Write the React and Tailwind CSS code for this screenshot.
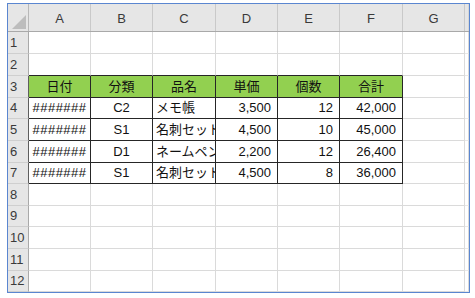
import React from "react";

const colW = ["w-[62px]", "w-[62px]", "w-[63px]", "w-[62px]", "w-[62px]", "w-[63px]", "w-[62px]"];
const rowH = ["h-[22px]", "h-[22px]", "h-[22px]", "h-[21px]", "h-[22px]", "h-[22px]", "h-[21px]", "h-[22px]", "h-[21px]", "h-[22px]", "h-[22px]", "h-[21px]"];
const letters = ["A", "B", "C", "D", "E", "F", "G"];

const tableData = {
  3: [
    { t: "日付", a: "c" },
    { t: "分類", a: "c" },
    { t: "品名", a: "c" },
    { t: "単価", a: "c" },
    { t: "個数", a: "c" },
    { t: "合計", a: "c" },
  ],
  4: [
    { t: "#######", a: "h" },
    { t: "C2", a: "c" },
    { t: "メモ帳", a: "l" },
    { t: "3,500", a: "r" },
    { t: "12", a: "r" },
    { t: "42,000", a: "r" },
  ],
  5: [
    { t: "#######", a: "h" },
    { t: "S1", a: "c" },
    { t: "名刺セット", a: "l" },
    { t: "4,500", a: "r" },
    { t: "10", a: "r" },
    { t: "45,000", a: "r" },
  ],
  6: [
    { t: "#######", a: "h" },
    { t: "D1", a: "c" },
    { t: "ネームペン", a: "l" },
    { t: "2,200", a: "r" },
    { t: "12", a: "r" },
    { t: "26,400", a: "r" },
  ],
  7: [
    { t: "#######", a: "h" },
    { t: "S1", a: "c" },
    { t: "名刺セット", a: "l" },
    { t: "4,500", a: "r" },
    { t: "8", a: "r" },
    { t: "36,000", a: "r" },
  ],
};

const font = { fontFamily: '"Liberation Sans", "Noto Sans CJK JP", sans-serif' };

function Cell({ r, c }) {
  const inTable = r >= 3 && r <= 7 && c <= 5;
  const aboveTable = r === 2 && c <= 5;
  const d = inTable ? tableData[r][c] : null;
  let cls = `${colW[c]} shrink-0 h-full flex items-center overflow-hidden whitespace-nowrap text-[13px] text-[#111] border-r border-b `;
  if (inTable) {
    cls += "border-[#262626] ";
  } else if (aboveTable) {
    cls += "border-r-[#dadada] border-b-[#262626] ";
  } else {
    cls += "border-[#dadada] ";
  }
  if (r === 3 && c <= 5) cls += "bg-[#92d050] ";
  else cls += "bg-white ";
  if (d) {
    if (d.a === "c") cls += "justify-center ";
    else if (d.a === "h") cls += "justify-center tracking-[0.5px] ";
    else if (d.a === "r") cls += "justify-end pr-[6px] ";
    else cls += "justify-start pl-[3px] ";
  }
  return <div className={cls}>{d ? d.t : null}</div>;
}

export default function App() {
  return (
    <div className="w-[475px] h-[298px] bg-white pl-[7px] pt-[3px]" style={font}>
      <div className="w-[463px] h-[290px] border border-[#5a86d0] bg-white flex flex-col overflow-hidden">
        {/* Column header */}
        <div className="h-[28px] flex shrink-0 bg-[#e6e6e6] border-b border-[#a9a9a9]">
          <div className="w-[21px] shrink-0 h-full border-r border-[#b8b8b8] flex items-end justify-end pr-[1px] pb-[1px]">
            <svg width="16" height="16" viewBox="0 0 16 16">
              <polygon points="15,1 15,15 1,15" fill="#bdbdbd" />
            </svg>
          </div>
          {letters.map((l, i) => (
            <div
              key={l}
              className={`${colW[i]} shrink-0 h-full border-r border-[#c9c9c9] flex items-end justify-center pb-[3px] text-[13px] text-[#3a3a3a]`}
            >
              {l}
            </div>
          ))}
          <div className="flex-1 h-full border-r border-[#d6d6d6]" />
        </div>
        {/* Rows */}
        {rowH.map((h, ri) => {
          const r = ri + 1;
          const dark = r >= 3 && r <= 7;
          return (
            <div key={r} className={`${h} flex shrink-0`}>
              <div
                className={`w-[21px] shrink-0 h-full bg-[#e6e6e6] border-b border-b-[#cfcfcf] border-r ${dark ? "border-r-[#5e5e5e]" : "border-r-[#a9a9a9]"} flex items-center pl-[2px] text-[13px] text-[#3a3a3a]`}
              >
                {r}
              </div>
              {letters.map((_, c) => (
                <Cell key={c} r={r} c={c} />
              ))}
              <div className="flex-1 h-full bg-white border-b border-[#e8e8e8] border-r border-r-[#dadada]" />
            </div>
          );
        })}
      </div>
    </div>
  );
}
